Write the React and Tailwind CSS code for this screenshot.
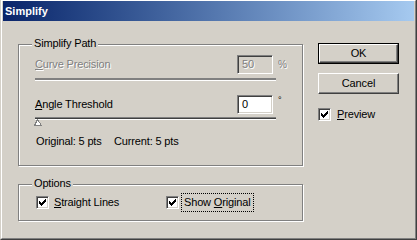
const CHECK_RUNS = [
  [0, 6, 1],
  [1, 5, 2],
  [2, 0, 1],
  [2, 4, 3],
  [3, 0, 2],
  [3, 3, 3],
  [4, 0, 5],
  [5, 1, 3],
  [6, 2, 1],
];

const CheckBox = ({ checked = true }) => (
  <span className="relative inline-block h-[13px] w-[13px] shrink-0 border border-t-[#808080] border-l-[#808080] border-r-white border-b-white bg-white shadow-[inset_1px_1px_0_#404040,inset_-1px_-1px_0_#d4d0c8]">
    {checked && (
      <svg className="absolute left-[2px] top-[2px]" width="7" height="7" viewBox="0 0 7 7" shapeRendering="crispEdges">
        {CHECK_RUNS.map(([y, x, w]) => (
          <rect key={`${y}-${x}`} x={x} y={y} width={w} height="1" fill="#000" />
        ))}
      </svg>
    )}
  </span>
);

const GroupBox = ({ label, className, children }) => (
  <div className={`relative border border-[#808080] shadow-[1px_1px_0_#fff,inset_1px_1px_0_#fff] ${className}`}>
    <span className="absolute left-[13px] top-[-8px] bg-[#d4d0c8] px-[2px] leading-[13px]">{label}</span>
    {children}
  </div>
);

const Sunken = ({ className, children }) => (
  <div className={`flex h-[19px] w-[36px] items-center border border-t-[#808080] border-l-[#808080] border-r-white border-b-white pl-[4px] shadow-[inset_1px_1px_0_#404040,inset_-1px_-1px_0_#d4d0c8] ${className}`}>
    {children}
  </div>
);

const disabled = 'text-[#808080] [text-shadow:1px_1px_0_#fff]';

export default function App() {
  return (
    <div className="h-[240px] w-[417px] border-r border-b border-l border-r-[#404040] border-b-[#404040] border-l-[#d4d0c8] bg-[#d4d0c8] font-['Liberation_Sans',Arial,sans-serif] text-[11px] leading-[13px] tracking-[-0.15px] text-black">
      <div className="flex h-full flex-col border-t border-r border-b border-l border-t-white border-l-white border-r-[#808080] border-b-[#808080] px-[1px]">
        <div className="flex h-[20px] items-center bg-gradient-to-r from-[#0a246a] to-[#a6caf0] pl-[2px] text-[11px] font-bold tracking-normal text-white">
          Simplify
        </div>

        <div className="flex pl-[15px]">
          <div className="flex flex-col">
            <GroupBox label="Simplify Path" className="mt-[23px] h-[122px] w-[285px] pl-[16px]">
              <div className="mt-[10px] flex h-[19px] items-center">
                <span className={`w-[202px] ${disabled}`}>
                  <u>C</u>urve Precision
                </span>
                <Sunken className={`bg-[#d4d0c8] ${disabled}`}>50</Sunken>
                <span className={`ml-[5px] text-[10px] ${disabled}`}>%</span>
              </div>
              <div className="mt-[4px] h-[3px] w-[241px] border-b border-b-white bg-[#808080]" />

              <div className="mt-[14px] flex h-[19px] items-center">
                <span className="w-[202px]">
                  <u>A</u>ngle Threshold
                </span>
                <Sunken className="bg-white">0</Sunken>
                <span className="ml-[5px] -mt-[8px] text-[9px]">°</span>
              </div>
              <div className="relative mt-[3px] h-[3px] w-[241px] border-t border-t-[#808080] border-b border-b-white bg-[#404040]">
                <svg className="absolute left-[-1px] top-[1px]" width="8" height="8" viewBox="0 0 8 8" shapeRendering="crispEdges">
                  <path d="M3.5 0.5 L7.5 6.5 H0.5 Z" fill="#fff" stroke="#808080" strokeWidth="1" />
                </svg>
              </div>

              <div className="mt-[15px] flex pl-[1px]">
                <span className="w-[78px]">Original: 5 pts</span>
                <span>Current: 5 pts</span>
              </div>
            </GroupBox>

            <GroupBox label="Options" className="mt-[18px] h-[37px] w-[285px] pl-[17px]">
              <div className="mt-[8px] flex items-center">
                <CheckBox />
                <span className="ml-[5px] w-[112px]">
                  <u>S</u>traight Lines
                </span>
                <CheckBox />
                <span className="ml-[2px] border border-dotted border-black px-[2px] py-[2px]">
                  Show <u>O</u>riginal
                </span>
              </div>
            </GroupBox>
          </div>

          <div className="ml-[15px] mt-[22px] flex flex-col">
            <button className="h-[21px] w-[81px] border border-black bg-[#d4d0c8] p-0">
              <span className="flex h-full w-full items-center justify-center border border-t-white border-l-white border-r-[#404040] border-b-[#404040] shadow-[inset_-1px_-1px_0_#808080]">
                OK
              </span>
            </button>
            <button className="mt-[9px] flex h-[21px] w-[81px] items-center justify-center border border-t-white border-l-white border-r-[#404040] border-b-[#404040] bg-[#d4d0c8] p-0 shadow-[inset_-1px_-1px_0_#808080]">
              Cancel
            </button>
            <div className="mt-[14px] flex items-center">
              <CheckBox />
              <span className="ml-[6px]">
                <u>P</u>review
              </span>
            </div>
          </div>
        </div>
      </div>
    </div>
  );
}
